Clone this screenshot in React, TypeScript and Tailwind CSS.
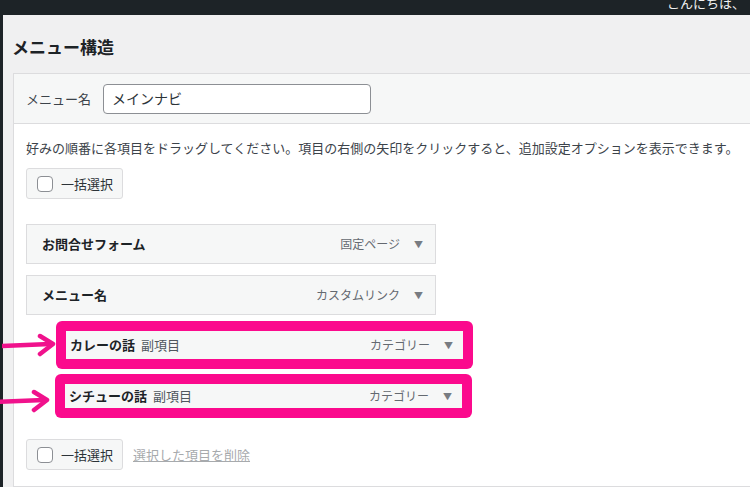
import React from "react";

const jp = "font-['Noto_Sans_CJK_JP','Noto_Sans',sans-serif]";

function Caret() {
  return <span className="text-[9px] text-[#787c82] ml-[14px] leading-none">▼</span>;
}

function Checkbox() {
  return <span className="w-[16px] h-[16px] rounded-[4px] border border-[#8c8f94] bg-white" />;
}

function BulkButton() {
  return (
    <div className="w-[97px] h-[31px] flex items-center gap-[8px] pl-[10px] border border-[#dcdcde] bg-[#f6f7f7] rounded-[3px] text-[13px] text-[#2c3338]">
      <Checkbox />
      <span>一括選択</span>
    </div>
  );
}

function MenuItem({ title, type }: { title: string; type: string }) {
  return (
    <div className="w-[410px] h-[40px] flex items-center justify-between pl-[15px] pr-[12px] border border-[#dcdcde] bg-[#f6f7f7]">
      <span className="text-[13px] font-semibold text-[#1d2327]">{title}</span>
      <span className="flex items-center text-[12px] text-[#646970]">
        {type}
        <Caret />
      </span>
    </div>
  );
}

function SubItem({ title, h, ml }: { title: string; h: string; ml: string }) {
  return (
    <div className={`w-[417px] ${h} ${ml} bg-[#fb0a8d] rounded-[6px] p-[10px]`}>
      <div className="h-full flex items-center justify-between pl-[4px] pr-[10px] bg-[#f6f7f7]">
        <span className="text-[13px] text-[#1d2327]">
          <span className="font-semibold">{title}</span>
          <span className="ml-[6px] text-[#50575e]">副項目</span>
        </span>
        <span className="flex items-center text-[12px] text-[#646970]">
          カテゴリー
          <Caret />
        </span>
      </div>
    </div>
  );
}

function Arrow({ top, left }: { top: string; left: string }) {
  return (
    <svg className={`absolute ${top} ${left}`} width="54" height="24" viewBox="0 0 54 24">
      <path d="M0 13 L48 11" stroke="#f0128c" strokeWidth="4.5" strokeLinecap="round" />
      <path d="M38 3 L51 11 L38 21" stroke="#f0128c" strokeWidth="4.5" fill="none" strokeLinecap="round" strokeLinejoin="round" />
    </svg>
  );
}

export default function App() {
  return (
    <div className={`relative w-[750px] h-[487px] overflow-hidden flex bg-[#f0f0f1] ${jp}`}>
      <div className="w-[3px] shrink-0 bg-[#1d2327]" />

      <div className="flex-1 min-w-0 overflow-hidden flex flex-col">
        <div className="h-[15px] shrink-0 bg-[#1d2327] flex justify-end pr-[5px] overflow-hidden">
          <span className="text-[13px] leading-[13px] text-[#f0f0f1] mt-[-4px]">こんにちは、</span>
        </div>

        <h2 className="mt-[20px] ml-[9px] text-[17px] leading-[24px] font-semibold text-[#1d2327]">
          メニュー構造
        </h2>

        <div className="mt-[14px] ml-[10px] w-[760px] shrink-0 flex-1 border border-[#dcdcde] bg-white">
          <div className="h-[50px] flex items-center gap-[12px] px-[12px] bg-[#f6f7f7] border-b border-[#dcdcde]">
            <span className="text-[13px] text-[#3c434a]">メニュー名</span>
            <div className="w-[268px] h-[30px] flex items-center px-[8px] border border-[#8c8f94] rounded-[4px] bg-white text-[14px] text-[#2c3338]">
              メインナビ
            </div>
          </div>

          <div className="px-[12px] pt-[14px] flex flex-col items-start">
            <p className="text-[13px] leading-[20px] text-[#3c434a] whitespace-nowrap">
              好みの順番に各項目をドラッグしてください。項目の右側の矢印をクリックすると、追加設定オプションを表示できます。
            </p>

            <div className="mt-[10px]">
              <BulkButton />
            </div>

            <div className="mt-[25px] flex flex-col gap-[11px]">
              <MenuItem title="お問合せフォーム" type="固定ページ" />
              <MenuItem title="メニュー名" type="カスタムリンク" />
            </div>

            <div className="mt-[6px] flex flex-col gap-[5px]">
              <SubItem title="カレーの話" h="h-[48px]" ml="ml-[30px]" />
              <SubItem title="シチューの話" h="h-[44px]" ml="ml-[29px]" />
            </div>

            <div className="mt-[21px] flex items-center gap-[10px]">
              <BulkButton />
              <span className="text-[13px] text-[#a7aaad] underline">選択した項目を削除</span>
            </div>
          </div>
        </div>
      </div>

      <Arrow top="top-[333px]" left="left-[2px]" />
      <Arrow top="top-[389px]" left="left-[-4px]" />
    </div>
  );
}
